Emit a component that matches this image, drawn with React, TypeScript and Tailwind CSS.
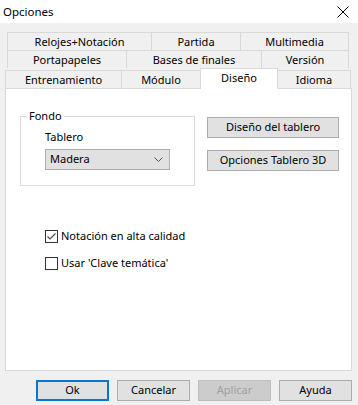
import React from "react";

function Tab({ label, w, last }: { label: string; w: string; last?: boolean }) {
  return (
    <div
      className={`${w} h-[18px] border-t border-l border-[#d9d9d9] ${last ? "border-r" : ""} flex items-center justify-center leading-none`}
    >
      {label}
    </div>
  );
}

function Btn({ label, w, extra }: { label: string; w: string; extra?: string }) {
  return (
    <div
      className={`${w} h-[21px] flex items-center justify-center border ${extra ?? "border-[#adadad] bg-[#e1e1e1]"}`}
    >
      {label}
    </div>
  );
}

export default function App() {
  return (
    <div
      className="w-[358px] h-[405px] bg-[#f0f0f0] text-[11px] text-black overflow-hidden"
      style={{ fontFamily: '"Segoe UI", "Noto Sans", sans-serif' }}
    >
      {/* title bar */}
      <div className="h-[23px] bg-white flex items-center justify-between pl-[3px] pr-[9px]">
        <span className="text-[11.5px]">Opciones</span>
        <svg width="12" height="12" viewBox="0 0 12 12">
          <path d="M0.5 0.5 L11.5 11.5 M11.5 0.5 L0.5 11.5" stroke="#000" strokeWidth="1" />
        </svg>
      </div>

      {/* tabs */}
      <div className="mt-[9px]">
        <div className="flex ml-[7px]">
          <Tab label="Relojes+Notación" w="w-[144px]" />
          <Tab label="Partida" w="w-[89px]" />
          <Tab label="Multimedia" w="w-[109px]" last />
        </div>
        <div className="flex ml-[7px]">
          <Tab label="Portapapeles" w="w-[119px]" />
          <Tab label="Bases de finales" w="w-[135px]" />
          <Tab label="Versión" w="w-[88px]" last />
        </div>
        <div className="flex ml-[5px] items-end">
          <Tab label="Entrenamiento" w="w-[116px]" />
          <Tab label="Módulo" w="w-[79px]" />
          <div className="w-[78px] h-[21px] -mb-[1px] relative z-10 bg-white border-t border-l border-r border-[#d9d9d9] flex items-start justify-center pt-[3px] leading-none">
            Diseño
          </div>
          <div className="w-[73px] h-[18px] border-t border-r border-[#d9d9d9] flex items-center justify-center leading-none">
            Idioma
          </div>
        </div>
      </div>

      {/* panel */}
      <div className="ml-[5px] w-[347px] h-[283px] bg-white border border-[#d9d9d9]">
        <div className="flex items-start">
          <fieldset className="ml-[14px] mt-[19px] w-[175px] h-[78px] border border-[#dcdcdc]">
            <legend className="ml-[6px] px-[2px] leading-[16px]">Fondo</legend>
            <div className="pl-[24px]">
              <div className="mt-[5px] leading-[16px]">Tablero</div>
              <div className="mt-[4px] w-[125px] h-[21px] bg-[#e1e1e1] border border-[#adadad] flex items-center justify-between pl-[4px] pr-[6px]">
                <span>Madera</span>
                <svg width="9" height="5" viewBox="0 0 9 5">
                  <path d="M0.5 0.5 L4.5 4.5 L8.5 0.5" stroke="#555" fill="none" strokeWidth="1" />
                </svg>
              </div>
            </div>
          </fieldset>
          <div className="ml-[12px] mt-[28px] flex flex-col gap-[12px]">
            <Btn label="Diseño del tablero" w="w-[132px]" />
            <Btn label="Opciones Tablero 3D" w="w-[132px]" />
          </div>
        </div>

        <div className="ml-[39px] mt-[42px] flex flex-col gap-[11px]">
          <div className="flex items-center h-[16px]">
            <div className="w-[13px] h-[13px] border border-[#333] flex items-center justify-center">
              <svg width="11" height="11" viewBox="0 0 11 11">
                <path d="M1.5 5.5 L4 8 L9.5 2.5" stroke="#4a4a4a" fill="none" strokeWidth="1.2" />
              </svg>
            </div>
            <span className="ml-[3px]">Notación en alta calidad</span>
          </div>
          <div className="flex items-center h-[16px]">
            <div className="w-[13px] h-[13px] border border-[#333]" />
            <span className="ml-[3px]">Usar 'Clave temática'</span>
          </div>
        </div>
      </div>

      {/* bottom buttons */}
      <div className="mt-[9px] flex justify-end gap-[8px] pr-[6px]">
        <Btn label="Ok" w="w-[73px]" extra="border-2 border-[#0078d7] bg-[#e1e1e1]" />
        <Btn label="Cancelar" w="w-[73px]" />
        <Btn label="Aplicar" w="w-[73px]" extra="border-[#bfbfbf] bg-[#cccccc] text-[#a0a0a0]" />
        <Btn label="Ayuda" w="w-[73px]" />
      </div>
    </div>
  );
}
